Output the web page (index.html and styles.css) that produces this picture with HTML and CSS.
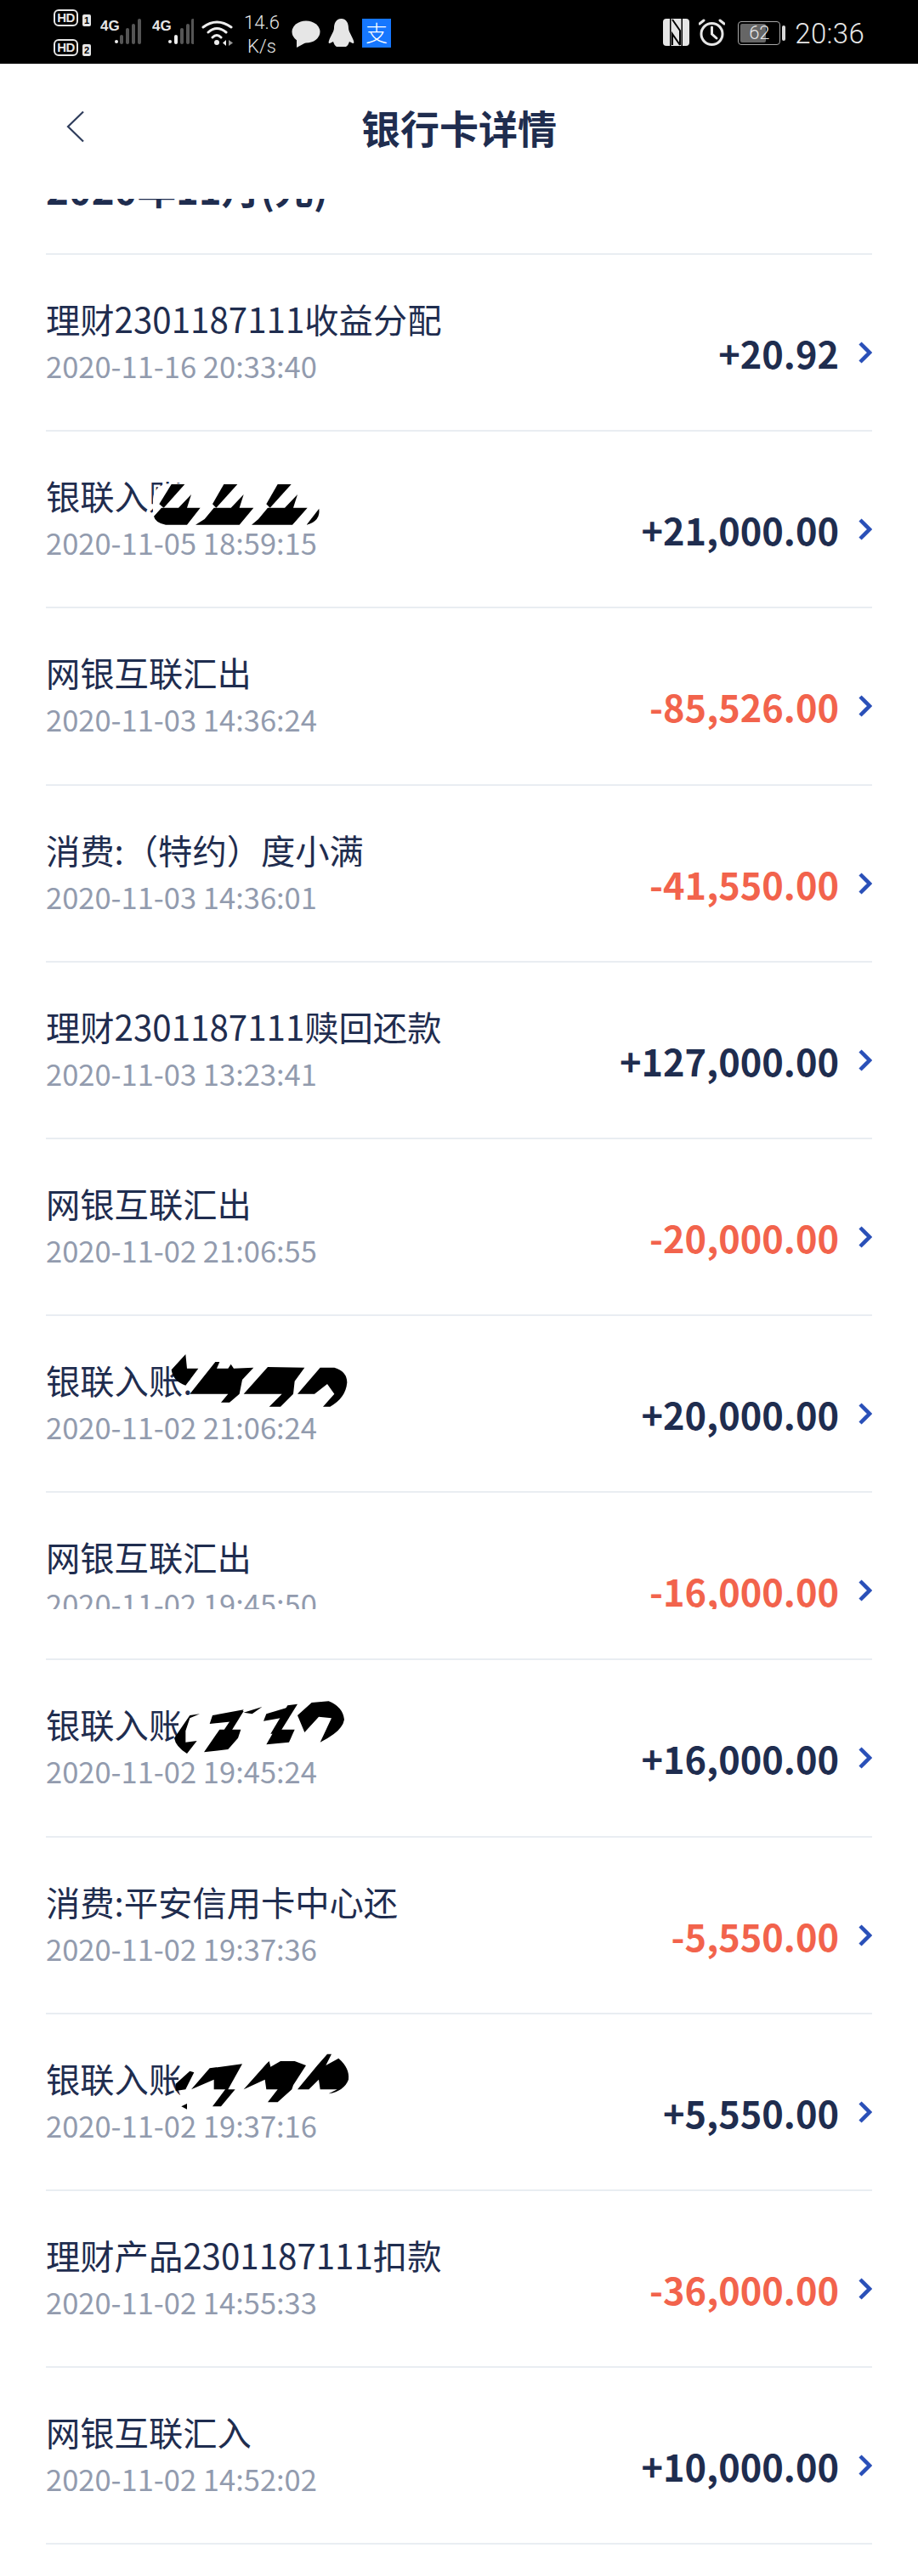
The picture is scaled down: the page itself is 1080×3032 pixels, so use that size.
FILE: index.html
```html
<!DOCTYPE html>
<html lang="zh-CN">
<head>
<meta charset="utf-8">
<title>银行卡详情</title>
<link rel="stylesheet" href="styles.css">
</head>
<body>
<div class="statusbar">
  <div class="status-left">
    <div class="sims">
      <div class="sim"><span class="hd">HD</span><span class="simno">1</span></div>
      <div class="sim sim2"><span class="hd">HD</span><span class="simno">2</span></div>
    </div>
    <svg class="signal" viewBox="0 0 49 31"><text class="g4" x="0" y="14">4G</text><circle cx="19" cy="27" r="2" fill="#eee"/><rect x="23" y="19" width="4" height="11" rx="2" fill="#555"/><rect x="30" y="11" width="4" height="19" rx="2" fill="#555"/><rect x="37" y="6" width="4" height="24" rx="2" fill="#555"/><rect x="44" y="0" width="4" height="30" rx="2" fill="#555"/></svg>
    <svg class="signal" viewBox="0 0 49 31"><text class="g4" x="0" y="14">4G</text><circle cx="21" cy="27" r="2" fill="#eee"/><rect x="26" y="19" width="4" height="11" rx="2" fill="#eee"/><rect x="33" y="11" width="4" height="19" rx="2" fill="#555"/><rect x="40" y="6" width="4" height="24" rx="2" fill="#555"/><rect x="46" y="0" width="3.5" height="30" rx="1.7" fill="#555"/></svg>
    <svg class="wifi" viewBox="0 0 37 31" fill="none" stroke="#eee" stroke-width="3" stroke-linecap="round"><path d="M2 9Q18 -3 35 9"/><path d="M8 15Q18 6 29 15"/><path d="M13 21Q18 16 23 21"/><circle cx="18" cy="27" r="3" fill="#eee" stroke="none"/><path d="M29 24L25 27.5L29 31Z" fill="#eee" stroke="none"/><path d="M32 24L37 27.5L32 31Z" fill="#999" stroke="none"/></svg>
    <div class="speed"><span>14.6</span><span>K/s</span></div>
    <svg class="bubble" viewBox="0 0 34 32"><ellipse cx="17" cy="13.5" rx="16.5" ry="13" fill="#e6e6e6"/><path d="M6 22L6 32L17 26Z" fill="#e6e6e6"/></svg>
    <svg class="penguin" viewBox="0 0 31 34"><path d="M15.500 0C9 0 7 6 7 11C7 15 3 20 1 26C0 29 1 30 4 28L6 27C7 30 8 32 10 33L21 33C23 32 24 30 25 27L27 28C30 30 31 29 30 26C28 20 24 15 24 11C24 6 22 0 15.500 0Z" fill="#e6e6e6"/></svg>
    <div class="alipay">支</div>
  </div>
  <div class="status-right">
    <svg class="nfc" viewBox="0 0 31 32"><path d="M4 0H8V32H4Q0 32 0 28V4Q0 0 4 0Z" fill="#e6e6e6"/><path d="M23 0H27Q31 0 31 4V28Q31 32 27 32H23Z" fill="#e6e6e6"/><rect x="9.500" y="0" width="12" height="32" fill="#e6e6e6"/><path d="M11 1L20 14V31M11 31V18L20 31" fill="none" stroke="#000" stroke-width="2"/></svg>
    <svg class="alarm" viewBox="0 0 31 32" fill="none" stroke="#e6e6e6" stroke-width="3"><circle cx="15.500" cy="18" r="12.500"/><path d="M15.500 10V18L21 23" stroke-linecap="round"/><path d="M1 6L6 2M30 6L25 2" stroke-linecap="round"/></svg>
    <div class="battery-wrap"><div class="battery"><div class="battery-fill"></div><span class="battery-num">62</span></div><div class="battery-tip"></div></div>
    <div class="clock">20:36</div>
  </div>
</div>

<header class="nav">
  <svg class="back" viewBox="0 0 22 38" fill="none" stroke="#2f3d5c" stroke-width="2.200"><path d="M20 1.500L2 19L20 36.500"/></svg>
  <h1 class="nav-title">银行卡详情</h1>
</header>

<section class="month"><div class="month-text">2020年11月(元)</div></section>

<main class="list">
  <div class="row"><div class="row-in"><div class="info"><div class="name">理财2301187111收益分配</div><div class="time">2020-11-16 20:33:40</div></div><div class="side"><span class="amt">+20.92</span><svg class="chev" viewBox="0 0 16 26"><path d="M2 2L13 13L2 24" /></svg></div></div></div>

  <div class="row"><div class="row-in"><div class="info"><div class="name">银联入账</div><div class="time">2020-11-05 18:59:15</div></div><div class="side"><span class="amt">+21,000.00</span><svg class="chev" viewBox="0 0 16 26"><path d="M2 2L13 13L2 24" /></svg></div></div>
    <svg class="blob blob-a" viewBox="0 0 660 210"><rect class="blob-bg" x="30" y="40" width="590" height="150" rx="55"/>
      <path d="M52 112L95 42L142 42L68 125Z"/><path d="M33 155L60 125L120 125L165 78L150 125L197 125L150 185L75 185Q38 178 33 155Z"/>
      <path d="M240 112L280 42L328 42L253 125Z"/><path d="M212 165L245 125L305 125L350 78L335 125L385 125L335 185L180 185Z"/>
      <path d="M430 112L470 42L518 42L443 125Z"/><path d="M402 165L435 125L495 125L540 78L525 125L575 125L540 165L522 185L378 185Z"/><path d="M572 185L616 128Q622 172 572 185Z"/></svg>
  </div>

  <div class="row"><div class="row-in"><div class="info"><div class="name">网银互联汇出</div><div class="time">2020-11-03 14:36:24</div></div><div class="side"><span class="amt neg">-85,526.00</span><svg class="chev" viewBox="0 0 16 26"><path d="M2 2L13 13L2 24" /></svg></div></div></div>

  <div class="row"><div class="row-in"><div class="info"><div class="name">消费:（特约）度小满</div><div class="time">2020-11-03 14:36:01</div></div><div class="side"><span class="amt neg">-41,550.00</span><svg class="chev" viewBox="0 0 16 26"><path d="M2 2L13 13L2 24" /></svg></div></div></div>

  <div class="row"><div class="row-in"><div class="info"><div class="name">理财2301187111赎回还款</div><div class="time">2020-11-03 13:23:41</div></div><div class="side"><span class="amt">+127,000.00</span><svg class="chev" viewBox="0 0 16 26"><path d="M2 2L13 13L2 24" /></svg></div></div></div>

  <div class="row"><div class="row-in"><div class="info"><div class="name">网银互联汇出</div><div class="time">2020-11-02 21:06:55</div></div><div class="side"><span class="amt neg">-20,000.00</span><svg class="chev" viewBox="0 0 16 26"><path d="M2 2L13 13L2 24" /></svg></div></div></div>

  <div class="row"><div class="row-in"><div class="info"><div class="name">银联入账:</div><div class="time">2020-11-02 21:06:24</div></div><div class="side"><span class="amt">+20,000.00</span><svg class="chev" viewBox="0 0 16 26"><path d="M2 2L13 13L2 24" /></svg></div></div>
    <svg class="blob blob-b" viewBox="0 0 690 225"><path d="M35 70L85 15L90 65L130 65L85 125Q40 110 35 70Z"/><path d="M100 155L190 42L205 42L195 65L235 65L245 50L255 65L325 62L285 105L275 155L240 185L210 185L235 155Z"/><path d="M290 155L375 60L505 62L470 110L465 155L420 200L380 200L425 155Z"/><path d="M480 155L560 62L610 62Q655 75 655 115Q650 170 595 200L570 200L610 155L585 120L540 155Z"/></svg>
  </div>

  <div class="row row-cut"><div class="row-in"><div class="info"><div class="name">网银互联汇出</div><div class="time">2020-11-02 19:45:50</div></div><div class="side"><span class="amt neg">-16,000.00</span><svg class="chev" viewBox="0 0 16 26"><path d="M2 2L13 13L2 24" /></svg></div></div></div>

  <div class="row"><div class="row-in"><div class="info"><div class="name">银联入账</div><div class="time">2020-11-02 19:45:24</div></div><div class="side"><span class="amt">+16,000.00</span><svg class="chev" viewBox="0 0 16 26"><path d="M2 2L13 13L2 24" /></svg></div></div>
    <svg class="blob blob-c" viewBox="0 0 690 225"><rect class="blob-bg" x="60" y="45" width="580" height="140" rx="50"/><path d="M45 155L100 75L135 70L100 85L85 130L85 170L125 165L90 210Q50 185 45 155Z"/><path d="M180 75L290 55L265 95L170 105Z"/><path d="M290 65L355 45L320 70Z"/><path d="M265 60L290 60L225 165L195 165Z"/><path d="M150 205L205 125L280 125L270 155L235 195Z"/><path d="M370 70L470 40L445 80L360 95Z"/><path d="M445 40L480 35L415 140L385 140Z"/><path d="M370 178L400 125L470 125L450 170Z"/><path d="M480 75L530 30L590 25Q640 45 645 90Q640 130 560 170L600 85L555 80L505 135Z"/></svg>
  </div>

  <div class="row"><div class="row-in"><div class="info"><div class="name">消费:平安信用卡中心还</div><div class="time">2020-11-02 19:37:36</div></div><div class="side"><span class="amt neg">-5,550.00</span><svg class="chev" viewBox="0 0 16 26"><path d="M2 2L13 13L2 24" /></svg></div></div></div>

  <div class="row"><div class="row-in"><div class="info"><div class="name">银联入账</div><div class="time">2020-11-02 19:37:16</div></div><div class="side"><span class="amt">+5,550.00</span><svg class="chev" viewBox="0 0 16 26"><path d="M2 2L13 13L2 24" /></svg></div></div>
    <svg class="blob blob-d" viewBox="0 0 690 225"><rect class="blob-bg" x="60" y="40" width="600" height="150" rx="50"/><path d="M50 125L100 80L115 85L85 145L50 150Z"/><path d="M70 205L90 195L90 215Z"/><path d="M105 145L170 70L285 55L235 145L260 145L210 205L180 205L225 145L185 145L185 110Z"/><path d="M290 145L370 55L380 45L385 65L420 45L470 45L510 60L465 130L460 145L410 190L375 190L410 145L370 145L365 110Z"/><path d="M480 145L550 60L585 20L600 20L580 60L625 35Q665 70 660 110Q645 150 590 160L620 145L560 145L555 110L520 145Z"/></svg>
  </div>

  <div class="row"><div class="row-in"><div class="info"><div class="name">理财产品2301187111扣款</div><div class="time">2020-11-02 14:55:33</div></div><div class="side"><span class="amt neg">-36,000.00</span><svg class="chev" viewBox="0 0 16 26"><path d="M2 2L13 13L2 24" /></svg></div></div></div>

  <div class="row"><div class="row-in"><div class="info"><div class="name">网银互联汇入</div><div class="time">2020-11-02 14:52:02</div></div><div class="side"><span class="amt">+10,000.00</span><svg class="chev" viewBox="0 0 16 26"><path d="M2 2L13 13L2 24" /></svg></div></div></div>
</main>
</body>
</html>
```

FILE: styles.css
```css
* { box-sizing: border-box; }
html, body { margin: 0; padding: 0; background: #fff; }
body { width: 1080px; height: 3032px; overflow: hidden; font-family: "Noto Sans CJK SC", "Noto Sans", sans-serif; color: #1f2d4f; }

.statusbar { height: 75px; background: #000; display: flex; justify-content: space-between; padding: 0 63px 0 63px; color: #e6e6e6; }
.status-left { display: flex; align-items: flex-start; }
.status-right { display: flex; align-items: flex-start; }

.sims { width: 44px; margin-top: 11px; margin-right: 11px; display: flex; flex-direction: column; gap: 15px; }
.sim { display: flex; align-items: flex-end; gap: 5px; height: 20px; }
.sim2 { height: 20px; }
.hd { width: 29px; height: 20px; border: 2.500px solid #e6e6e6; border-radius: 6px; font: bold 15px/15px "Liberation Sans", sans-serif; text-align: center; letter-spacing: -0.500px; }
.simno { width: 10px; height: 14px; background: #e6e6e6; color: #000; border-radius: 2px; font: bold 11px/14px "Liberation Sans", sans-serif; text-align: center; }

.signal { width: 49px; height: 31px; margin-top: 22px; margin-right: 12px; display: block; }
.g4 { font: bold 17px "Liberation Sans", sans-serif; fill: #e6e6e6; }
.wifi { width: 37px; height: 31px; margin-top: 23px; margin-left: -3px; margin-right: 12px; display: block; }
.speed { width: 44px; margin-top: 13px; margin-right: 13px; display: flex; flex-direction: column; align-items: center; font: 300 22px/28px Roboto, sans-serif; color: #e6e6e6; }
.bubble { width: 34px; height: 32px; margin-top: 24px; margin-right: 9px; display: block; }
.penguin { width: 31px; height: 34px; margin-top: 22px; margin-right: 9px; display: block; }
.alipay { width: 34px; height: 34px; margin-top: 22px; background: #1677ff; color: #fff; font-size: 26px; font-weight: 300; line-height: 32px; text-align: center; }

.nfc { width: 31px; height: 32px; margin-top: 22px; margin-right: 11px; display: block; }
.alarm { width: 31px; height: 32px; margin-top: 22px; margin-right: 15px; display: block; }
.battery-wrap { display: flex; align-items: center; gap: 2px; margin-top: 25px; margin-right: 11px; }
.battery { position: relative; width: 50px; height: 28px; border: 1.500px solid #a8a8a8; border-radius: 4px; text-align: center; overflow: hidden; }
.battery-fill { position: absolute; left: 2px; top: 2px; bottom: 2px; width: 62%; background: #666; border-radius: 2px; }
.battery-num { position: relative; font: 300 22px/25px Roboto, sans-serif; color: #e6e6e6; }
.battery-tip { width: 4px; height: 18px; background: #d8d8d8; border-radius: 2px; }
.clock { font: 300 33px/28px Roboto, sans-serif; color: #e6e6e6; margin-top: 26px; letter-spacing: 0.300px; }

.nav { height: 159px; position: relative; display: flex; justify-content: center; padding-top: 41px; }
.back { position: absolute; left: 78px; top: 55px; width: 22px; height: 38px; }
.nav-title { margin: 0; font-size: 46px; line-height: 66px; font-weight: 700; color: #1f2d4f; }

.month { height: 66px; overflow: hidden; margin: 0 54px; border-bottom: 2px solid #e9edf2; display: flex; flex-direction: column; justify-content: flex-end; padding-bottom: 47px; }
.month-text { font-size: 45.500px; line-height: 60px; font-weight: 700; flex: none; }

.row { position: relative; height: 208.200px; margin: 0 54px; border-bottom: 2px solid #e9edf2; }
.row-in { display: flex; justify-content: space-between; height: 206px; overflow: hidden; }
.row-cut { height: 197px; }
.row-cut .row-in { height: 137px; }
.info { padding-top: 49px; }
.name { font-size: 40.300px; line-height: 52px; white-space: nowrap; }
.time { font-size: 34.500px; line-height: 44px; margin-top: 7px; color: #929bae; white-space: nowrap; }
.side { display: flex; align-items: center; gap: 23px; padding-top: 85px; height: 145px; }
.amt { font-size: 43.300px; line-height: 60px; font-weight: 700; color: #1f2d4f; }
.neg { color: #f2634c; }
.chev { width: 16px; height: 26px; fill: none; stroke: #2a50b8; stroke-width: 4.500px; display: block; }

.blob { position: absolute; fill: #000; }
.blob-bg { fill: #fff; }
.blob-a { left: 116px; top: 48px; width: 220px; height: 70px; }
.blob-b { left: 136px; top: 40px; width: 230px; height: 75px; }
.blob-c { left: 136px; top: 40px; width: 230px; height: 75px; }
.blob-d { left: 136px; top: 40px; width: 230px; height: 75px; }
```
